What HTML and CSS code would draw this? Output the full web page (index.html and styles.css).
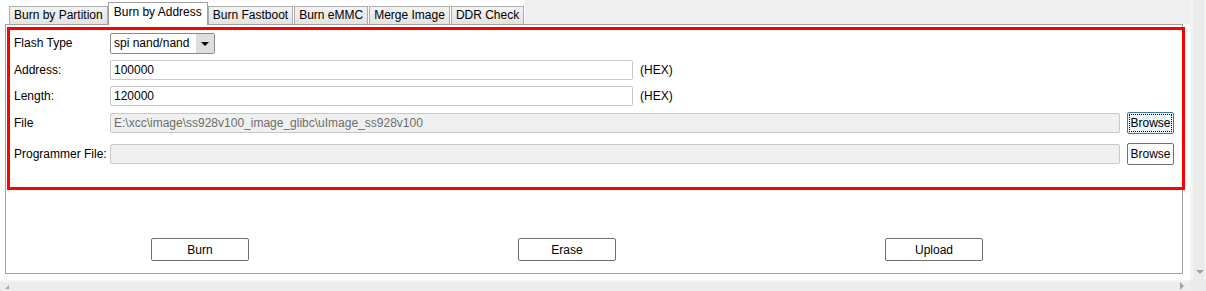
FILE: index.html
```html
<!DOCTYPE html>
<html lang="en">
<head>
    <meta charset="UTF-8">
    <title>Burn by Address</title>
    <link rel="stylesheet" href="styles.css">
</head>
<body>
    <div class="window">
        <div class="content">
            <div class="tabBar">
                <div class="tab">Burn by Partition</div>
                <div class="tab selected">Burn by Address</div>
                <div class="tab">Burn Fastboot</div>
                <div class="tab">Burn eMMC</div>
                <div class="tab">Merge Image</div>
                <div class="tab">DDR Check</div>
                <div class="tabFiller"></div>
            </div>
            <div class="panel">
                <div class="form">
                    <div class="row rowFlash">
                        <label class="label">Flash Type</label>
                        <div class="select">
                            <span class="selectText">spi nand/nand</span>
                            <span class="selectArrow"></span>
                        </div>
                    </div>
                    <div class="row rowAddress">
                        <label class="label">Address:</label>
                        <div class="input short">100000</div>
                        <span class="unit">(HEX)</span>
                    </div>
                    <div class="row rowLength">
                        <label class="label">Length:</label>
                        <div class="input short">120000</div>
                        <span class="unit">(HEX)</span>
                    </div>
                    <div class="row rowFile">
                        <label class="label">File</label>
                        <div class="input long disabled">E:\xcc\image\ss928v100_image_glibc\uImage_ss928v100</div>
                        <button class="browse focused"><span>Browse</span></button>
                    </div>
                    <div class="row rowProg">
                        <label class="label">Programmer File:</label>
                        <div class="input long disabled"></div>
                        <button class="browse"><span>Browse</span></button>
                    </div>
                </div>
                <div class="actions">
                    <button class="action">Burn</button>
                    <button class="action">Erase</button>
                    <button class="action">Upload</button>
                </div>
            </div>
        </div>
        <div class="vScroll">
            <span class="arrowDown"></span>
        </div>
        <div class="hScroll">
            <span class="arrowLeft"></span>
            <span class="arrowRight"></span>
        </div>
        <div class="corner"></div>
    </div>
</body>
</html>
```

FILE: styles.css
```css
* { box-sizing: border-box; }

body {
  margin: 0;
  background: #ffffff;
  font: 12px "Liberation Sans", Arial, sans-serif;
  color: #000000;
}

.window {
  display: grid;
  grid-template-columns: 1190px 16px;
  grid-template-rows: 280px 11px;
  width: 1206px;
  height: 291px;
  overflow: hidden;
}

.content {
  padding-left: 5px;
}

/* Tabs */
.tabBar {
  display: flex;
  align-items: flex-end;
  height: 24px;
  padding-left: 4px;
}

.tab {
  height: 18px;
  line-height: 16px;
  padding: 0 4px;
  border: 1px solid #adadad;
  border-bottom: none;
  margin-right: 1px;
  background: linear-gradient(#f3f3f3, #e3e3e3);
  white-space: nowrap;
}

.tab.selected {
  position: relative;
  height: 23px;
  line-height: 19px;
  margin: 0 0 -1px -1px;
  padding: 0 5px;
  border-color: #a0a0a0;
  background: #ffffff;
  z-index: 1;
}

.tabFiller {
  flex: 1;
  align-self: stretch;
  background: #efefef;
}

/* Panel */
.panel {
  width: 1178px;
  height: 250px;
  border: 1px solid #a0a0a0;
  background: #ffffff;
  padding-left: 1px;
}

.form {
  margin: 2px -3px 0 0;
  height: 163px;
  border: 3px solid #ff0000;
  padding-left: 4px;
}

.row {
  display: flex;
  align-items: center;
  height: 26px;
}

.rowAddress { margin-top: 1px; }
.rowFile { margin-top: 1px; }
.rowProg { margin-top: 5px; }

.label {
  width: 96px;
  flex-shrink: 0;
}

.select {
  display: flex;
  width: 105px;
  height: 21px;
  border: 1px solid #8a8a8a;
  border-radius: 2px;
  background: #ffffff;
}

.selectText {
  flex: 1;
  padding-left: 3px;
  line-height: 19px;
}

.selectArrow {
  width: 18px;
  background: #dedede;
  position: relative;
}

.selectArrow::after {
  content: "";
  position: absolute;
  left: 5px;
  top: 8px;
  border-left: 4px solid transparent;
  border-right: 4px solid transparent;
  border-top: 4px solid #000000;
}

.input {
  height: 20px;
  line-height: 18px;
  padding-left: 3px;
  border: 1px solid #c8c8c8;
  border-radius: 2px;
  background: #ffffff;
  white-space: nowrap;
  overflow: hidden;
}

.input.short { width: 523px; }
.input.long { width: 1010px; }

.input.disabled {
  background: #f0f0f0;
  color: #6d6d6d;
}

.unit {
  margin-left: 7px;
}

/* Buttons */
button {
  font: inherit;
  color: #000000;
  padding: 0;
  cursor: default;
}

.browse {
  width: 47px;
  height: 22px;
  margin-left: 7px;
  border: 1px solid #707070;
  border-radius: 2px;
  background: #fdfdfd;
}

.browse.focused {
  border-color: #3d7bad;
  background: #eef5fb;
  padding: 1px;
}

.browse.focused span {
  display: block;
  height: 18px;
  line-height: 16px;
  border: 1px dotted #000000;
}

.actions {
  display: flex;
  gap: 269px;
  padding-left: 144px;
  margin-top: 48px;
}

.action {
  width: 98px;
  height: 23px;
  border: 1px solid #707070;
  border-radius: 2px;
  background: #ffffff;
}

/* Scrollbars */
.vScroll {
  position: relative;
  background: linear-gradient(90deg, #f4f4f4 0 3px, #ebebeb 3px 14px, #f2f2f2 14px);
}

.arrowDown {
  position: absolute;
  left: 6px;
  top: 270px;
  border-left: 4px solid transparent;
  border-right: 4px solid transparent;
  border-top: 4px solid #a3a3a3;
}

.hScroll {
  position: relative;
  background: linear-gradient(#f4f4f4 0 2px, #ececec 2px);
}

.arrowLeft {
  position: absolute;
  left: 5px;
  top: 5px;
  border-top: 4px solid transparent;
  border-right: 4px solid #a3a3a3;
}

.arrowRight {
  position: absolute;
  left: 1180px;
  top: 2px;
  border-top: 4px solid transparent;
  border-bottom: 4px solid transparent;
  border-left: 4px solid #a3a3a3;
}

.corner {
  background: #ebebeb;
}
```
